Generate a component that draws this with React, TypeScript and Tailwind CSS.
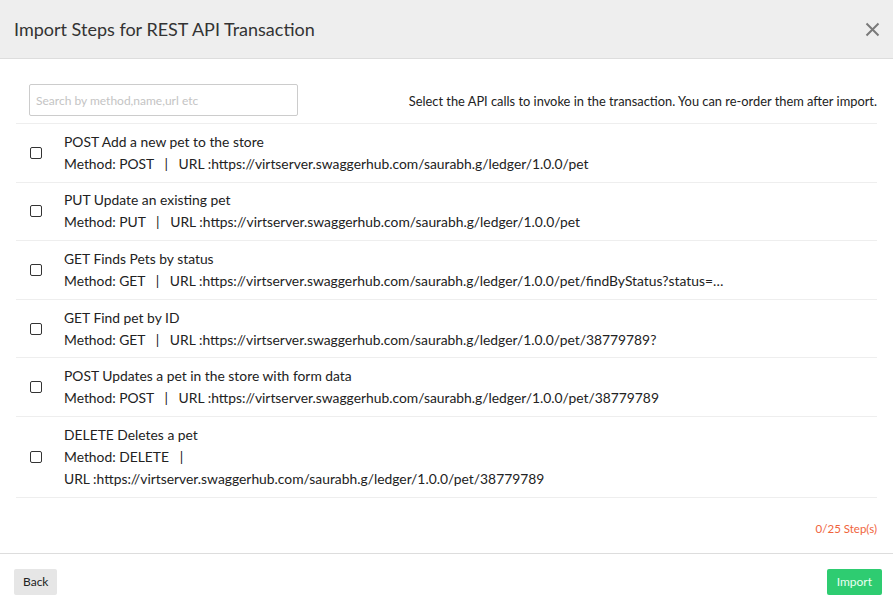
import React from "react";

type Step = {
  id: number;
  method: string;
  name: string;
  url: string;
  wrap?: boolean;
};

const steps: Step[] = [
  { id: 1, method: "POST", name: "Add a new pet to the store", url: "https://virtserver.swaggerhub.com/saurabh.g/ledger/1.0.0/pet" },
  { id: 2, method: "PUT", name: "Update an existing pet", url: "https://virtserver.swaggerhub.com/saurabh.g/ledger/1.0.0/pet" },
  { id: 3, method: "GET", name: "Finds Pets by status", url: "https://virtserver.swaggerhub.com/saurabh.g/ledger/1.0.0/pet/findByStatus?status=…" },
  { id: 4, method: "GET", name: "Find pet by ID", url: "https://virtserver.swaggerhub.com/saurabh.g/ledger/1.0.0/pet/38779789?" },
  { id: 5, method: "POST", name: "Updates a pet in the store with form data", url: "https://virtserver.swaggerhub.com/saurabh.g/ledger/1.0.0/pet/38779789" },
  { id: 6, method: "DELETE", name: "Deletes a pet", url: "https://virtserver.swaggerhub.com/saurabh.g/ledger/1.0.0/pet/38779789", wrap: true },
];

export default function App() {
  return (
    <div className="w-[893px] h-[607px] bg-white flex flex-col text-[#222] font-['Lato','Liberation_Sans',sans-serif]">
      {/* HEADER */}
      <div className="h-[59px] shrink-0 bg-[#eeeeee] border-b border-[#dddddd] flex items-center justify-between pl-[14px] pr-[12px]">
        <h1 className="text-[18px] text-[#333] leading-none">Import Steps for REST API Transaction</h1>
        <button className="w-[18px] h-[18px] flex items-center justify-center text-[#7a7a7a]">
          <svg width="15" height="15" viewBox="0 0 15 15" fill="none" stroke="currentColor" strokeWidth="2">
            <path d="M1.5 1.5l12 12M13.5 1.5l-12 12" />
          </svg>
        </button>
      </div>

      {/* BODY */}
      <div className="flex-1 px-[16px] pt-[25px]">
        <div className="flex items-center justify-between pl-[13px] pb-[7px] border-b border-[#eeeeee]">
          <input
            placeholder="Search by method,name,url etc"
            className="w-[269px] h-[32px] border border-[#cccccc] rounded-[2px] px-[6px] text-[12px] placeholder:text-[#c4c4c4] outline-none"
          />
          <p className="text-[12.85px] text-[#222] mt-[4px]">
            Select the API calls to invoke in the transaction. You can re-order them after import.
          </p>
        </div>

        {steps.map((s) => (
          <div key={s.id} className="flex items-center border-b border-[#eeeeee] pl-[14px] py-[6.8px] text-[13.85px] leading-[22px]">
            <span className="w-[12px] h-[12px] shrink-0 border border-[#333] rounded-[2px] bg-white" />
            <div className="ml-[22px] min-w-0">
              <div>{s.method} {s.name}</div>
              {s.wrap ? (
                <>
                  <div>Method: {s.method}&nbsp;&nbsp;&nbsp;|</div>
                  <div>URL :{s.url}</div>
                </>
              ) : (
                <div className="whitespace-nowrap">
                  Method: {s.method}&nbsp;&nbsp;&nbsp;|&nbsp;&nbsp;&nbsp;URL :{s.url}
                </div>
              )}
            </div>
          </div>
        ))}

        <div className="text-right text-[11.5px] text-[#f0643c] pt-[22px]">0/25 Step(s)</div>
      </div>

      {/* FOOTER */}
      <div className="h-[54px] shrink-0 border-t border-[#dddddd] flex items-center justify-between px-[14px] pt-[3px]">
        <button className="h-[26px] px-[9px] bg-[#e6e6e6] text-[12px] text-[#222] rounded-[2px]">Back</button>
        <button className="h-[26px] px-[10px] bg-[#2ecc71] text-[12px] text-[#eafff2] rounded-[2px] mr-[-3px]">Import</button>
      </div>
    </div>
  );
}
